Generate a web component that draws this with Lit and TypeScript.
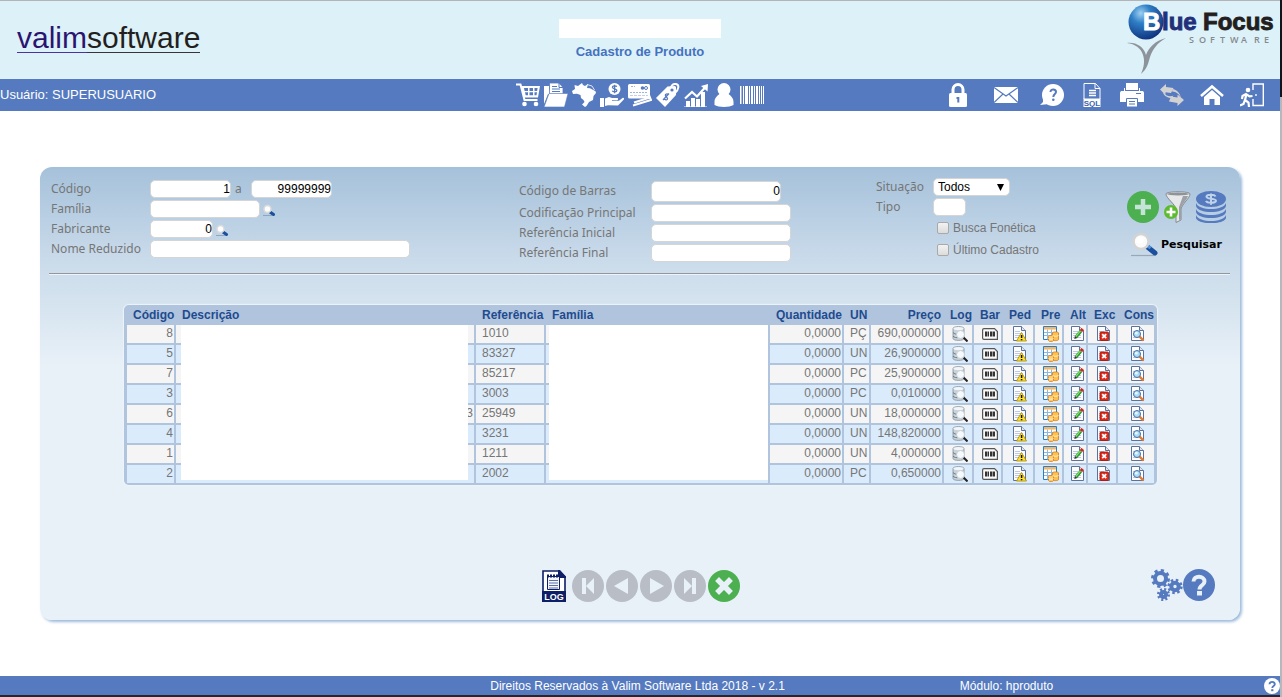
import { LitElement, html, css, svg } from "lit";
import { customElement } from "lit/decorators.js";

const icon = (w: number, h: number, body: unknown) =>
  html`<svg width=${w} height=${h} viewBox="0 0 ${w} ${h}" aria-hidden="true">${body}</svg>`;

const lens = svg`
  <path d="M0 23.500h23" stroke="#9aa7b5" stroke-width="1.200"/>
  <path d="M16.500 15l7.500 6" stroke="#1c4f9c" stroke-width="5" stroke-linecap="round"/>
  <path d="M17 14l2.500 2.200" stroke="#4f93e0" stroke-width="3"/>
  <circle cx="10" cy="9.500" r="7.500" fill="#fbfbfb" stroke="#d3d3d3" stroke-width="2.500"/>
  <circle cx="9" cy="8" r="3.500" fill="#fff"/>`;

const smallLens = svg`
  <path d="M0 11.500h9" stroke="#8fa6bf"/>
  <path d="M7 8l3.500 2.500" stroke="#1c4f9c" stroke-width="3" stroke-linecap="round"/>
  <circle cx="4.500" cy="5" r="3.500" fill="#fdfdfd" stroke="#dadada" stroke-width="1.500"/>`;

const bar = {
  cart: svg`<path d="M0 1.500h4.500l4 15.500h13" fill="none" stroke="#fff" stroke-width="2"/>
    <path fill="#fff" fill-rule="evenodd" d="M5 3h19l-2 11.500H8zM8 5l.6 3H12V5zm5.500 0v3h3.500V5zm5 0v3h2.600l.5-3zM9 9.300l.7 3H12v-3zm4.500 0v3h3.500v-3zm5 0v3h2l.5-3z"/>
    <circle cx="8.500" cy="21" r="2.300" fill="#fff"/><circle cx="20" cy="21" r="2.300" fill="#fff"/>`,
  folder: svg`<path fill="#fff" d="M0 3h5v4h13v4H4L0 21z"/><path fill="#fff" stroke="#557abf" stroke-width=".800" d="M5.500 0H15l4 4.500V11h-13.500z"/>
    <path d="M15 0v4.500h4M8 3.500h5M8 6h8M8 8.500h8" stroke="#557abf" fill="none"/><path fill="#fff" stroke="#557abf" stroke-width=".600" d="M5 10.500h19L20.500 24H0z"/>`,
  brazil: svg`<path fill="#fff" d="M0 8l3-2-.5-4L6 3l4-3 1 2 2 1 3-2-1 4 3 .2 5.500 3L24 10l-2.500 3-.5 4-4 2-2.500 4L13 24l-3-2.500 2.500-2.500-1-2-2.500-2-.5-3L5 10.800 1 11z"/>
    <path d="M15 1.500l5 1.500 2.500 4" fill="none" stroke="#fff" stroke-width=".800"/>`,
  hand: svg`<circle cx="14.500" cy="6" r="6" fill="#fff"/><path d="M16.800 3.800c-.5-1.200-4.400-1.300-4.400.5 0 2 4.500 1.200 4.500 3.200 0 1.800-4 1.800-4.700.3M14.600 1.800v8.400" fill="none" stroke="#557abf" stroke-width="1.300"/>
    <path fill="#fff" d="M0 15h4v9H0zM5 15.500l4-1.500 3 1h5c1.500 0 1.500 2 0 2.200h-5v.8l7-.3 3.500-2.700c1.300-.5 2 .5 1.300 1.600L18 22.500 8 22.200l-3 .8z"/>`,
  cards: svg`<path fill="none" stroke="#fff" stroke-width="2" d="M5 22.500l18-5.500-2-5M6 19.500l16-5"/>
    <rect y="1" width="22" height="14.500" rx="1.500" fill="#fff"/><path fill="none" stroke="#9fb4dc" d="M3 3.500h4M2 9.500h18" stroke-dasharray="2 1"/><path stroke="#c3d0ea" d="M2 12.500h18" stroke-dasharray="3 1"/><circle cx="14.500" cy="5" r="1.800" fill="#557abf"/><circle cx="18" cy="5" r="1.500" fill="none" stroke="#557abf"/>`,
  tag: svg`<path fill="#fff" d="M0 15L11.500 3.500 19 3l1 1v8L9 24z"/><path d="M15 7c-1-4 2-6.500 5-6 3.500.8 3 5-1 9" fill="none" stroke="#fff" stroke-width="2"/><circle cx="16" cy="7" r="1.600" fill="#557abf"/>
    <path d="M12.500 11.500c-2-1.500-4 .3-2.700 1.800 1 1.200 2.500 1.500 1.500 3-.9 1.200-2.800.2-3.500-1M13 10.500l-6 6.500" fill="none" stroke="#557abf" stroke-width="1.300"/>`,
  chart: svg`<path fill="#fff" d="M2 18h4v6H2zm5-3h4v9H7zm5 1h4v8h-4zm5-7h4v15h-4z"/><path d="M0 24h23" stroke="#fff"/><path d="M1 15.500L8 9l5 4.500L21.500 4" fill="none" stroke="#fff" stroke-width="2.200"/><path fill="#fff" d="M17 3l7-2-.5 7.500z"/>`,
  person: svg`<circle cx="12" cy="6.500" r="6.500" fill="#fff"/><path fill="#fff" d="M8 10.500C5 13 2.500 15 2.500 19v3c4 2.500 15 2.500 19 0v-3c0-4-2.500-6-5.500-8.500z"/>`,
  barcode: svg`<path fill="#fff" d="M0 3h1.500v18H0zm3 0h1v18H3zm2 0h3v18H5zm4 0h1v18H9zm2 0h2v18h-2zm3 0h1v18h-1zm2 0h2v18h-2zm3 0h1v18h-1zm2 0h1v18h-1zm2 0h1v18h-1z"/>`,
  lock: svg`<path d="M7 11V6.500a5 5 0 0 1 10 0V11" fill="none" stroke="#fff" stroke-width="3"/><rect x="3" y="10" width="18" height="14" rx="1.500" fill="#fff"/><path d="M10.500 14h2.800v5.500h-2V16h-.8z" fill="#557abf"/>`,
  mail: svg`<path fill="#fff" d="M0 4h24v16H0z"/><path d="M0 4.500l12 8.500 12-8.500M0 19.500l9-8.500m15 8.500l-9-8.500" fill="none" stroke="#557abf" stroke-width="1.200"/>`,
  help: svg`<circle cx="13" cy="12" r="11" fill="#fff"/><path fill="#fff" d="M3 13v6l-3 3 9-1z"/><path d="M10.500 9c0-3.500 5.500-3.300 5.500 0 0 2-2.700 2-2.700 5" fill="none" stroke="#557abf" stroke-width="2"/><circle cx="13.300" cy="16.700" r="1.300" fill="#557abf"/>`,
  sql: svg`<path fill="none" stroke="#fff" d="M4 16V.500h11.500L20 5.500V16M15 .500v5h5"/><path fill="#fff" d="M3.500 15.500h17v8.500h-17z"/><path d="M9 7.500h7M9 10h7M9 12.500h7" stroke="#fff" stroke-width="1.600"/>
    <text x="12" y="22.500" text-anchor="middle" font-family="Liberation Sans, sans-serif" font-size="8" font-weight="700" fill="#3c64ad">SQL</text>`,
  printer: svg`<path fill="#fff" d="M6 0h12v7H6z"/><path fill="#fff" d="M0 10c0-1.500 1-2 2-2h20c1 0 2 .5 2 2v9H0z"/><path d="M4.500 8V5M19.500 8V5" stroke="#fff"/><path fill="#fff" stroke="#557abf" d="M6.500 15.500h11V24h-11z"/><path stroke="#557abf" d="M9 18.500h6M9 21h6"/><path stroke="#557abf" d="M16 10.500h5"/>`,
  refresh: svg`<path fill="#d2d2d2" d="M0 6.500L6 1v3l7.500 1-2.500 5-5.500-.8V12zM24 17l-6.500 6v-3L9 18.500l2-5 6.500 1V11.500z"/><path fill="#d2d2d2" d="M3 9c2 4 8 5 10.500 3.500L12 15C8 15 3.500 13 3 9zM21 15.500C20 11 15 8 12 8.500l.5-2.500c4 .5 8 4 8.500 9.500z"/>`,
  home: svg`<path d="M1 13L12 3.500 23 13" fill="none" stroke="#fff" stroke-width="2.600"/><path fill="#fff" d="M4 14l8-7 8 7v8h-5.500v-6h-5v6H4z"/>`,
  exit: svg`<path fill="none" stroke="#fff" stroke-width="1.400" d="M13 7V1h10.300v21.500H13V16"/><circle cx="16" cy="12" r=".900" fill="#fff"/><circle cx="8" cy="7" r="2.300" fill="#fff"/><path d="M12.500 13l-3 .3L6 11l-3.500 2-.5 3M6.500 11L5 17l3.500 2.500L9 24M5 17l-1.500 4L0 22.500" fill="none" stroke="#fff" stroke-width="2.200"/>`,
};

const page = svg`<path fill="#fdfdff" stroke="#5d7299" d="M1.500.500h8l4 4v10h-12z"/><path fill="#dfe6f3" stroke="#5d7299" d="M9.500.500v4h4"/><path stroke="#bcc8e4" d="M3 5.500h5M3 7.500h8M3 9.500h8M3 11.500h8"/>`;

const rowIcons: [string, unknown][] = [
  ["Log", svg`<path fill="#c9d2d9" stroke="#7f909c" stroke-width=".800" d="M1 2.500C1 0 12 0 12 2.500v10c0 2.500-11 2.500-11 0z"/><ellipse cx="6.500" cy="2.600" rx="5" ry="1.600" fill="#f2f6f8"/><path d="M1 6.500c1 1.500 4 2 5 1.500M1 10c1 1.500 4 2 5 1.500" stroke="#667984" fill="none"/><path d="M11 11l4.500 4.500" stroke="#222" stroke-width="2"/><circle cx="8.500" cy="8.500" r="4" fill="#f6fafc" stroke="#c5ced3"/>`],
  ["Bar", svg`<path fill="#fafafa" stroke="#555" stroke-width="1.200" d="M2 2.600h10.500l2.900 2.900v7.900H2Q.600 13.400.600 12V4Q.600 2.600 2 2.600z"/><path fill="#333" d="M3 5.500h2v5H3zm2.500 0h1.500v5H5.500zm2.500 0h2v5H8zm2.500 0h2.500v5h-2.500z"/>`],
  ["Ped", svg`${page}<path fill="#ffe02e" stroke="#a88a00" stroke-width=".800" d="M9.500 6.500l5 8.500H4.500z"/><path d="M9.600 9v3m0 1v1.200" stroke="#111" stroke-width="1.500"/>`],
  ["Pre", svg`<path fill="#fff" stroke="#2b7cc0" d="M.500.500h13v13H.500z"/><path fill="#f6b765" d="M1 1h12v2.500H1z"/><path d="M1 6.500h12M1 9.500h12M4.500 3.500v10M8.500 3.500v10" stroke="#8fb9dc"/><path fill="#ffc04d" stroke="#d77a12" stroke-width=".800" d="M9.500 7c0-1.500 6-1.500 6 0v6.500c0 1.500-6 1.500-6 0z"/><path fill="#ffcf70" stroke="#d77a12" stroke-width=".800" d="M5.500 10.500c0-1.500 5-1.500 5 0v4c0 1.300-5 1.300-5 0z"/><path d="M9.500 9.500c2 1 4 1 6 0M5.500 12.500c2 1 3 1 5 0" fill="none" stroke="#fff1c7"/>`],
  ["Alt", svg`${page}<path d="M6 11L11 5" stroke="#2f9a2a" stroke-width="3.200"/><path d="M5.800 10.500L10.700 4.700" stroke="#7fe06d" stroke-width="1.200"/><path d="M11 5l1.800-2" stroke="#d8281e" stroke-width="3.200"/><path fill="#333" d="M4.300 13l.6-3 2.400 2z"/>`],
  ["Exc", svg`${page}<rect x="4" y="6" width="8.500" height="8.500" rx="1" fill="#dd2c1c" stroke="#a01508" stroke-width=".800"/><path d="M6.200 8.200l4 4m0-4l-4 4" stroke="#fff" stroke-width="1.800"/>`],
  ["Cons", svg`${page}<path d="M9.500 10.500l4 4" stroke="#e5792c" stroke-width="2.400"/><circle cx="7" cy="8" r="3.500" fill="#a9dcf8" stroke="#4d6f9e"/><circle cx="6.300" cy="7.200" r="1.400" fill="#e6f8ff"/>`],
];

const rows: [string, string, string, string, string][] = [
  ["8", "", "1010", "PÇ", "690,000000"],
  ["5", "", "83327", "UN", "26,900000"],
  ["7", "", "85217", "PC", "25,900000"],
  ["3", "", "3003", "PC", "0,010000"],
  ["6", "3", "25949", "UN", "18,000000"],
  ["4", "", "3231", "UN", "148,820000"],
  ["1", "", "1211", "UN", "4,000000"],
  ["2", "", "2002", "PC", "0,650000"],
];

const round = (fill: string, body: unknown) =>
  icon(32, 32, svg`<circle cx="16" cy="16" r="16" fill=${fill}/>${body}`);

const gear = (cx: number, cy: number, r: number) => {
  const step = (Math.PI * 2 * r) / 16;
  return svg`<circle cx=${cx} cy=${cy} r=${r - 2.5} fill="none" stroke="#557abf" stroke-width="4"/>
    <circle cx=${cx} cy=${cy} r=${r} fill="none" stroke="#557abf" stroke-width="3" stroke-dasharray="${step} ${step}"/>`;
};

@customElement("app-root")
export class AppRoot extends LitElement {
  static styles = css`
    :host { display: flex; min-height: 100vh; font: 12px/16px "Liberation Sans", Arial, sans-serif; color: #767676; background: #fff; }
    * { box-sizing: border-box; }
    svg { display: block; }
    button { border: 0; padding: 0; background: none; font: inherit; color: inherit; cursor: pointer; display: flex; align-items: center; }
    .shell { flex: 1; min-width: 0; display: flex; flex-direction: column; }
    .edge { width: 2px; background: linear-gradient(#10151c 97px, #b5b7ba 97px); }
    .top { display: grid; grid-template-columns: 1fr auto 1fr; height: 79px; border-top: 1px solid #b3b3b8; background: #ddf1f8; }
    .brand { justify-self: start; margin: 20px 0 0 17px; height: 32px; display: flex; font: 30px/34px "Liberation Sans", Arial, sans-serif; color: #231f20; text-decoration: none; }
    .brand span { border-bottom: 1px solid #3a3436; }
    .brand .first { color: #2a1470; border-color: #4a35a0; }
    .heading { display: flex; flex-direction: column; align-items: center; padding-top: 18px; }
    .blank { width: 162px; height: 19px; background: #fff; }
    h1 { margin: 6px 0 0; font-size: 13px; line-height: 16px; color: #4472c0; }
    .focus { justify-self: end; margin: 0 4px 0 0; }
    .bar { display: grid; grid-template-columns: 1fr auto 1fr; align-items: center; height: 32px; background: #557abf; color: #fff; font-size: 13px; }
    .tools { display: flex; gap: 4px; }
    .tools.end { justify-content: flex-end; gap: 16px; padding-right: 16px; }
    .mail { margin: 0 6px 0 8px; }
    .panel { display: flex; flex-direction: column; margin: 56px 40px; min-height: 453px; border-radius: 12px; background: linear-gradient(#a5c1da, #c9daea 90px, #d3e2ee 130px, #e9f1f8 200px); box-shadow: 2px 2px 3px #9dbbdc; }
    .filters { display: grid; grid-template-columns: 468fr 357fr 251fr 113fr; padding: 0 0 0 11px; }
    .col { padding-top: 12px; }
    .col.raised { padding-top: 10px; }
    .line { display: flex; align-items: center; height: 20px; }
    .line.tall { height: 24px; }
    .line.check { height: 22px; padding-left: 61px; gap: 4px; }
    .name { font: 12px/16px "Noto Sans", sans-serif; width: 99px; }
    .name.wide { width: 132px; }
    .name.short { width: 57px; }
    .to { font: 12px/16px "Noto Sans", sans-serif; width: 20px; padding-left: 4px; }
    input.box, select { height: 18px; border: 1px solid #d5d5d5; border-radius: 5px; background: #fff; font: 12px/16px "Liberation Sans", Arial, sans-serif; color: #000; padding: 0; outline: 0; }
    input.box { text-align: right; }
    .s { width: 81px; } .m { width: 110px; } .xs { width: 63px; } .l { width: 260px; }
    .code { width: 130px; } .ref { width: 140px; } .tiny { width: 33px; }
    .tall input.box { height: 21px; }
    .pick { position: relative; display: flex; align-items: center; }
    select { width: 77px; appearance: none; padding-left: 4px; }
    .pick svg { position: absolute; right: 6px; pointer-events: none; }
    .find { margin: 2px 0 0 3px; }
    input.tick { appearance: none; width: 12px; height: 12px; margin: 0; border: 1px solid #a9a9a9; border-radius: 2px; background: linear-gradient(#f2f2f2, #dcdcdc); }
    .actions { padding-top: 24px; }
    .trio { display: flex; gap: 4px; align-items: center; }
    .search { margin: 9px 0 0 4px; gap: 2px; font: bold 11px/16px "DejaVu Sans", Verdana, sans-serif; color: #000; }
    .rule { margin: 10px 10px 0 9px; border: 0; border-top: 1px solid #92979b; border-bottom: 1px solid #eef3f7; height: 2px; }
    .grid { position: relative; margin: 30px 83px 0 84px; }
    table { width: 100%; table-layout: fixed; border-spacing: 2px 2px; background: #b0c4de; border: 1px solid #b0c4de; border-top: 0; border-bottom: 0; border-radius: 5px; box-shadow: 0 0 1px 1px #edf4fa; }
    th, td { height: 18px; padding: 0 1px 2px 6px; line-height: 16px; text-align: left; overflow: hidden; white-space: nowrap; }
    th { height: 16px; font-weight: bold; color: #1f4b8e; padding-bottom: 0; overflow: visible; }
    td { background: #f5f5f5; }
    tr:nth-child(even) td { background: #daebfb; }
    .num { text-align: right; }
    td.act { padding: 0 2px 0 6px; }
    .act button { margin: 0 auto; }
    .c1 { width: 47px; } .c3 { width: 68px; } .c4 { width: 222px; } .c5 { width: 72px; } .c6 { width: 25px; } .c7 { width: 71px; }
    .a0 { width: 28px; } .a1 { width: 27px; } .a2 { width: 30px; } .a3 { width: 27px; } .a4 { width: 22px; } .a5 { width: 28px; } .a6 { width: 36px; }
    .cover { position: absolute; background: #fff; top: 20px; bottom: 5px; }
    .cover.desc { left: 57px; right: 689px; }
    .cover.fam { right: 389px; width: 219px; }
    .foot { display: grid; grid-template-columns: 1fr auto 1fr; align-items: center; margin-top: auto; padding: 0 25px 17px 27px; }
    .nav { display: flex; gap: 2px; grid-column: 2; }
    .log { margin-right: 4px; }
    .aid { display: flex; justify-content: flex-end; padding-bottom: 2px; }
    footer { margin-top: auto; display: flex; align-items: center; height: 21px; background: #557abf; border-bottom: 2px solid #26272b; color: #fff; padding-left: 38.3%; }
    .module { margin: 0 auto 0 175px; }
  `;

  private tool(name: keyof typeof bar, label: string) {
    return html`<button class=${name} aria-label=${label} title=${label}>${icon(24, 24, bar[name])}</button>`;
  }

  private field(id: string, label: string, size: string, value = "", wide = "", tall = "", extra: unknown = "") {
    return html`<div class="line ${tall}"><label class="name ${wide}" for=${id}>${label}</label><input class="box ${size}" id=${id} .value=${value}>${extra}</div>`;
  }

  render() {
    const find = (label: string) => html`<button type="button" class="find" aria-label=${label}>${icon(13, 12, smallLens)}</button>`;
    return html`
      <div class="shell">
        <header class="top">
          <a class="brand" href="#"><span class="first">valim</span><span>software</span></a>
          <div class="heading"><div class="blank"></div><h1>Cadastro de Produto</h1></div>
          <svg class="focus" width="150" height="76" viewBox="0 0 150 76" role="img" aria-label="BlueFocus Software">
            <defs><radialGradient id="ball" cx=".350" cy=".250" r=".800"><stop offset="0" stop-color="#9fd0f2"/><stop offset=".350" stop-color="#2f7fc6"/><stop offset="1" stop-color="#0d2f7c"/></radialGradient></defs>
            <circle cx="20" cy="21" r="17.500" fill="url(#ball)"/>
            <path d="M1 42c9-1 17 4 19 12 3-8 9-14 20-17-9 5-13 11-16 19-2 7-3 12-9 17 3-7 4-13 2-19-2-7-8-11-16-12z" fill="#8d939b"/>
            <g font-family="Liberation Sans, Arial, sans-serif" font-weight="700" font-size="24" stroke-width=".900">
              <text x="17" y="29" fill="#fff" stroke="#fff">B</text><text x="36" y="29" fill="#22307a" stroke="#22307a">lue</text><text x="77" y="29" fill="#231f20" stroke="#231f20">Focus</text>
            </g>
            <g font-family="Open Sans, sans-serif" font-weight="600" font-size="9" fill="#85898f">
              <text x="63 73 84 94 104 115 128 138" y="42">SOFTWARE</text>
            </g>
          </svg>
        </header>
        <nav class="bar">
          <span>Usuário: SUPERUSUARIO</span>
          <div class="tools">
            ${this.tool("cart", "Vendas")}${this.tool("folder", "Arquivos")}${this.tool("brazil", "Regiões")}${this.tool("hand", "Financeiro")}${this.tool("cards", "Cartões")}${this.tool("tag", "Preços")}${this.tool("chart", "Relatórios")}${this.tool("person", "Clientes")}${this.tool("barcode", "Produtos")}
          </div>
          <div class="tools end">
            ${this.tool("lock", "Senha")}${this.tool("mail", "Mensagens")}${this.tool("help", "Suporte")}${this.tool("sql", "Banco de dados")}${this.tool("printer", "Imprimir")}${this.tool("refresh", "Atualizar")}${this.tool("home", "Início")}${this.tool("exit", "Sair")}
          </div>
        </nav>
        <main class="panel">
          <form class="filters" @submit=${(e: Event) => e.preventDefault()}>
            <div class="col">
              ${this.field("codigo", "Código", "s", "1", "", "", html`<label class="to" for="ate">a</label><input class="box s" id="ate" .value=${"99999999"}>`)}
              ${this.field("familia", "Família", "m", "", "", "", find("Buscar família"))}
              ${this.field("fabricante", "Fabricante", "xs", "0", "", "", find("Buscar fabricante"))}
              ${this.field("nome", "Nome Reduzido", "l")}
            </div>
            <div class="col">
              ${this.field("barras", "Código de Barras", "code", "0", "wide", "tall")}
              ${this.field("codificacao", "Codificação Principal", "ref", "", "wide")}
              ${this.field("inicial", "Referência Inicial", "ref", "", "wide")}
              ${this.field("final", "Referência Final", "ref", "", "wide")}
            </div>
            <div class="col raised">
              <div class="line"><label class="name short" for="situacao">Situação</label><span class="pick"><select id="situacao"><option>Todos</option></select>${icon(7, 7, svg`<path d="M0 0h7L3.500 7z"/>`)}</span></div>
              ${this.field("tipo", "Tipo", "tiny", "", "short")}
              <div class="line check"><input class="tick" type="checkbox" id="fonetica"><label for="fonetica">Busca Fonética</label></div>
              <div class="line check"><input class="tick" type="checkbox" id="ultimo"><label for="ultimo">Último Cadastro</label></div>
            </div>
            <div class="actions">
              <div class="trio">
                <button type="button" aria-label="Incluir">${round("#4caf50", svg`<path d="M8 16h16M16 8v16" stroke="#c5e3d6" stroke-width="4.500"/>`)}</button>
                <button type="button" aria-label="Filtrar">${icon(28, 32, svg`<path fill="#e6e8ea" stroke="#85898e" d="M3 3c0-3 24-3 24 0 0 4-8 10-9 15v11l-5 2.500V18C12 13 3 7 3 3z"/><path fill="#9ca1a7" d="M20 5h5c-1 4-7 9-7 13v10l-2 1V16z"/><ellipse cx="15" cy="3" rx="11" ry="1.500" fill="#8d9399"/><circle cx="8" cy="21" r="7" fill="#5dbb2f"/><path d="M8 16.500v9M3.500 21h9" stroke="#fff" stroke-width="2.600"/>`)}</button>
                <button type="button" aria-label="Preços">${icon(32, 32, svg`<ellipse cx="16" cy="8" rx="15" ry="8" fill="#557abf"/><path d="M1 12c3 8 27 8 30 0v3c-2 8-28 8-30 0zM1 18c3 8 27 8 30 0v3c-2 8-28 8-30 0zM1 24c3 8 27 8 30 0v3c-2 7-28 7-30 0z" fill="#557abf"/><path d="M20.500 5.500c-1-2.500-9-2.500-9 .3 0 2.500 9.500 1.200 9.500 4 0 2.600-9 2.500-10 0M16 2.500v11.300" fill="none" stroke="#bfd3ea" stroke-width="2"/>`)}</button>
              </div>
              <button class="search">${icon(28, 26, lens)}Pesquisar</button>
            </div>
          </form>
          <hr class="rule">
          <div class="grid">
            <table>
              <colgroup><col class="c1"><col><col class="c3"><col class="c4"><col class="c5"><col class="c6"><col class="c7">${rowIcons.map((_, i) => html`<col class="a${i}">`)}</colgroup>
              <thead><tr>
                <th class="num">Código</th><th>Descrição</th><th>Referência</th><th>Família</th><th class="num">Quantidade</th><th>UN</th><th class="num">Preço</th>
                ${rowIcons.map(([name]) => html`<th>${name}</th>`)}
              </tr></thead>
              <tbody>
                ${rows.map(([code, desc, ref, unit, price]) => html`<tr>
                  <td class="num">${code}</td><td class="num">${desc}</td><td>${ref}</td><td></td><td class="num">0,0000</td><td>${unit}</td><td class="num">${price}</td>
                  ${rowIcons.map(([name, body]) => html`<td class="act"><button aria-label="${name} ${code}">${icon(16, 16, body)}</button></td>`)}
                </tr>`)}
              </tbody>
            </table>
            <div class="cover desc"></div><div class="cover fam"></div>
          </div>
          <div class="foot">
            <div class="nav">
              <button class="log" aria-label="Log">${icon(24, 32, svg`<path fill="#fff" stroke="#0d1f66" stroke-width="1.600" d="M1 1h16l6 6v24H1z"/><path fill="#0d1f66" d="M16 0h2l6 6.500V8h-8zM0 21h24v11H0z"/><path fill="#f4f6fa" stroke="#0d1f66" d="M5.500 6.500h12v13h-12z"/><path d="M5 6h13" stroke="#0d1f66" stroke-width="3" stroke-dasharray="2 1"/><path d="M7 10.500h9M7 13h9M7 15.500h9M7 18h9" stroke="#5b6fa8"/><text x="12" y="30" text-anchor="middle" font-family="Liberation Sans, sans-serif" font-weight="700" font-size="9" fill="#fff">LOG</text>`)}</button>
              <button aria-label="Primeiro">${round("#b9bec6", svg`<path fill="#e9f1f8" d="M10 8h4v16h-4zM22 8v16l-8-8z"/>`)}</button>
              <button aria-label="Anterior">${round("#b9bec6", svg`<path fill="#e9f1f8" d="M22 8v16L8 16z"/>`)}</button>
              <button aria-label="Próximo">${round("#b9bec6", svg`<path fill="#e9f1f8" d="M10 8v16l14-8z"/>`)}</button>
              <button aria-label="Último">${round("#b9bec6", svg`<path fill="#e9f1f8" d="M10 8v16l8-8zM18 8h4v16h-4z"/>`)}</button>
              <button aria-label="Fechar">${round("#4caf50", svg`<path d="M11 11l10 10M21 11L11 21" stroke="#e9f1f8" stroke-width="5.500" stroke-linecap="square"/>`)}</button>
            </div>
            <div class="aid">
              <button aria-label="Configurações">${icon(32, 32, svg`${gear(9.5, 9.5, 8)}${gear(24, 17.5, 6.2)}${gear(12.5, 25.5, 5)}`)}</button>
              <button aria-label="Ajuda">${round("#557abf", svg`<path d="M10.500 12.500c0-6.500 11-6 11 0 0 4-5 3.500-5 8" fill="none" stroke="#e9f1f8" stroke-width="4"/><path fill="#e9f1f8" d="M14 22h5v4.500h-5z"/>`)}</button>
            </div>
          </div>
        </main>
        <footer>
          <span>Direitos Reservados à Valim Software Ltda 2018 - v 2.1</span>
          <span class="module">Módulo: hproduto</span>
          <button aria-label="Ajuda do módulo">${icon(16, 16, svg`<circle cx="8" cy="8" r="8" fill="#fff"/><path d="M5.500 6.300c0-3.400 5.300-3 5.300 0 0 1.800-2.500 1.700-2.500 3.700" fill="none" stroke="#557abf" stroke-width="1.900"/><path fill="#557abf" d="M7.200 11.200h2.200v2H7.200z"/>`)}</button>
        </footer>
      </div>
      <div class="edge"></div>`;
  }
}
